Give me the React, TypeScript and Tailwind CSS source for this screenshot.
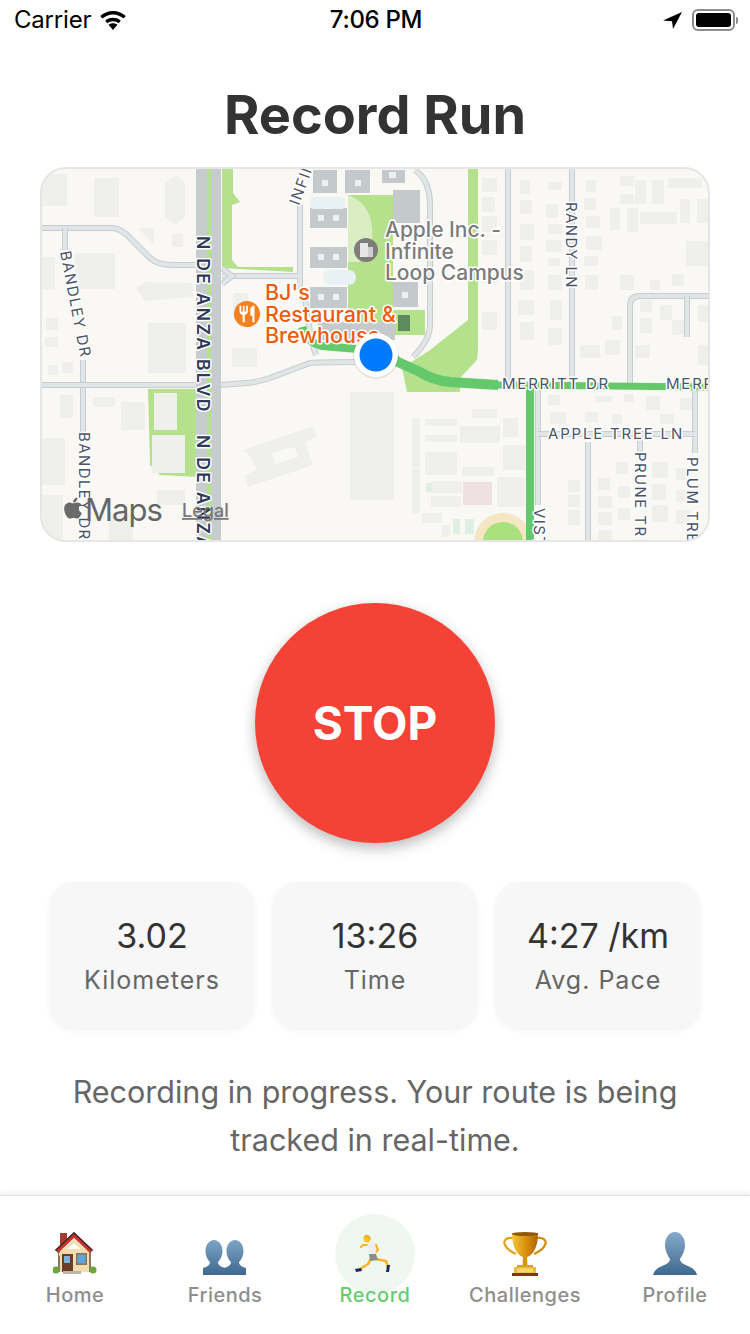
import React from 'react';
import { FaApple } from 'react-icons/fa';
import { MdRestaurant } from 'react-icons/md';

type Box = [number, number, number, number];

// x1, y1, x2, y2 in page coordinates (the svg's viewBox starts at the map corner)
const BUILDINGS: Box[] = [
  [42, 174, 67, 206], [94, 178, 119, 217], [172, 234, 183, 247], [60, 248, 72, 252], [75, 253, 115, 289], [42, 257, 55, 290],
  [148, 323, 186, 373], [46, 318, 58, 330], [45, 337, 58, 347], [233, 293, 248, 310], [232, 348, 257, 367],
  [48, 365, 58, 375], [62, 362, 73, 373], [60, 395, 73, 418], [93, 397, 115, 407], [121, 402, 145, 430], [42, 438, 65, 485],
  [42, 495, 63, 540], [157, 490, 185, 505], [109, 513, 133, 540], [350, 392, 394, 500],
  [472, 409, 497, 418], [412, 418, 420, 467], [425, 419, 457, 426], [425, 435, 457, 442], [460, 426, 500, 443], [425, 452, 457, 475],
  [462, 467, 494, 476], [503, 418, 518, 437], [503, 445, 527, 470], [412, 468, 420, 513], [422, 513, 442, 523], [442, 525, 450, 537],
  [431, 481, 462, 493], [431, 496, 461, 507], [497, 477, 525, 507],
  // houses
  [482, 178, 497, 192], [482, 197, 495, 212], [482, 216, 497, 232], [482, 240, 497, 255], [482, 270, 497, 283], [482, 312, 497, 330],
  [520, 180, 530, 194], [520, 200, 532, 214], [548, 182, 562, 190], [546, 204, 558, 218], [548, 224, 562, 234], [520, 224, 534, 240],
  [546, 240, 562, 252], [520, 246, 532, 262], [548, 258, 560, 266], [520, 270, 534, 290], [548, 275, 562, 290], [518, 300, 534, 315],
  [550, 300, 562, 320], [520, 322, 534, 340], [548, 328, 562, 345], [586, 180, 596, 192], [584, 198, 596, 210], [586, 216, 600, 228],
  [586, 236, 602, 250], [584, 256, 598, 266], [585, 275, 598, 290], [620, 176, 634, 186], [620, 194, 634, 204], [635, 180, 646, 204],
  [652, 180, 664, 204], [668, 178, 702, 188], [610, 208, 620, 230], [627, 208, 638, 232], [640, 212, 677, 224], [680, 199, 690, 223],
  [697, 199, 708, 223], [686, 241, 708, 266], [650, 280, 660, 290], [620, 275, 634, 290], [672, 274, 684, 286], [640, 300, 652, 312],
  [612, 316, 622, 330], [640, 318, 652, 333], [660, 305, 672, 320], [672, 320, 684, 335], [698, 305, 708, 322], [605, 340, 620, 355],
  [635, 345, 650, 358], [698, 345, 708, 365], [580, 345, 600, 358], [548, 395, 560, 405], [595, 396, 612, 402], [624, 394, 634, 402],
  [646, 396, 660, 410], [680, 398, 692, 410], [550, 412, 566, 424], [585, 412, 598, 422], [612, 414, 622, 424], [660, 414, 674, 424],
  [568, 480, 580, 492], [568, 495, 580, 507], [568, 510, 580, 525], [598, 478, 610, 490], [598, 496, 612, 508], [598, 512, 612, 525],
  [598, 530, 612, 540], [652, 462, 668, 478], [652, 484, 666, 500], [652, 505, 668, 522], [676, 468, 688, 480], [676, 490, 688, 502],
  [676, 510, 690, 524], [616, 462, 628, 474], [618, 486, 630, 498], [618, 508, 630, 520],
];

const GREY_BUILDINGS: Box[] = [
  [310, 208, 347, 228], [310, 247, 347, 268], [310, 287, 347, 308], [313, 170, 337, 193], [345, 170, 370, 193],
  [382, 170, 405, 183], [393, 190, 420, 223], [393, 282, 418, 307], [318, 322, 395, 340],
];

const WINDOWS: Box[] = [
  [318, 215, 324, 221], [333, 215, 339, 221], [318, 254, 324, 260], [333, 254, 339, 260], [318, 294, 324, 300], [333, 294, 339, 300],
  [322, 180, 328, 186], [355, 180, 361, 186], [389, 172, 396, 178], [402, 292, 408, 298],
];

const LIGHT_ROADS: string[] = [
  'M42 228 L113 228 Q122 229 130 238 L150 258 Q158 265 172 265 L196 265',
  'M65 228 L65 250',
  'M83 360 L83 432',
  'M42 385 L196 385',
  'M220 385 L247 383 Q258 382 270 378 L310 363 Q320 362 355 362',
  'M222 276 L300 276 M300 205 L300 290',
  'M222 268 L232 276 L222 284',
  'M304 290 Q310 340 316 355',
  'M415 170 Q430 180 430 205 L430 325 Q430 340 413 357',
  'M508 168 L508 385',
  'M572 168 L572 385',
  'M708 296 L640 296 Q630 296 630 306 L630 385',
  'M687 296 L687 337',
  'M695 385 L695 453',
  'M538 388 L538 505',
  'M538 434 L695 434',
  'M588 442 L588 542',
  'M640 440 L640 452',
];

function MapLabel({ x, y, size, fill, weight = 400, spacing = 0, rotate, children }: {
  x: number; y: number; size: number; fill: string; weight?: number; spacing?: number; rotate?: number; children: string;
}) {
  return (
    <text
      x={x}
      y={y}
      fontSize={size}
      fontWeight={weight}
      fill={fill}
      stroke="#ffffff"
      strokeWidth={3}
      strokeLinejoin="round"
      paintOrder="stroke"
      letterSpacing={spacing}
      transform={rotate ? `rotate(${rotate} ${x} ${y})` : undefined}
    >
      {children}
    </text>
  );
}

function RunMap() {
  return (
    <div className="mx-10 mt-[21px] h-[375px] overflow-hidden rounded-[26px] border-2 border-[#e6e6e6] bg-[#f9f8f4]">
      <svg viewBox="42 169 666 371" className="block h-full w-full font-['Inter',sans-serif]">
        <polygon points="222,168 233,168 233,193 240,202 232,205 232,260 238,267 293,267 293,272 222,268" fill="#b5e18d" />
        <polygon points="348,195 393,195 393,340 348,340" fill="#b5e18d" />
        <polygon points="468,168 478,168 478,350 477,360 460,378 460,392 407,392 402,368 430,350 468,320" fill="#b5e18d" />
        <polygon points="148,389 197,389 197,477 160,475 150,465" fill="#b5e18d" />
        <polygon points="393,310 425,310 425,335 393,335" fill="#b5e18d" />
        <path d="M348 195 Q375 205 372 240 L360 262 L348 262Z" fill="#f3f6e8" opacity="0.6" />

        {BUILDINGS.map(([x1, y1, x2, y2], i) => (
          <rect key={i} x={x1} y={y1} width={x2 - x1} height={y2 - y1} fill="#efefec" />
        ))}
        <polygon points="165,183 177,175 185,183 185,217 175,225 165,217" fill="#efefec" />
        <polygon points="138,228 154,228 154,245" fill="#efefec" />
        <polygon points="136,288 145,282 193,283 193,297 145,301" fill="#efefec" />
        <rect x={154} y={393} width={23} height={37} fill="#efefec" />
        <rect x={152} y={435} width={33} height={38} fill="#efefec" />
        <polygon points="243,450 313,426 317,437 305,442 313,465 248,487 245,475 257,470 250,456" fill="#efefec" />
        <polygon points="272,453 295,447 298,457 275,464" fill="#f9f8f4" />
        <rect x={463} y={482} width={29} height={23} fill="#efe1e1" />
        <rect x={426} y={483} width={6} height={9} fill="#dff0e2" />
        <rect x={453} y={519} width={7} height={15} fill="#dff0e2" />
        <rect x={465} y={519} width={9} height={15} fill="#dff0e2" />
        <circle cx={503} cy={542} r={29} fill="#f4e7c4" />
        <circle cx={503} cy={542} r={20} fill="#a9e17f" />

        {LIGHT_ROADS.map((d) => (
          <g key={d}>
            <path d={d} fill="none" stroke="#c6cdce" strokeWidth={6} />
            <path d={d} fill="none" stroke="#e0e6e7" strokeWidth={4} />
          </g>
        ))}

        {GREY_BUILDINGS.map(([x1, y1, x2, y2], i) => (
          <rect key={i} x={x1} y={y1} width={x2 - x1} height={y2 - y1} fill="#c4c9cb" />
        ))}
        {WINDOWS.map(([x1, y1, x2, y2], i) => (
          <rect key={i} x={x1} y={y1} width={x2 - x1} height={y2 - y1} fill="#edf1f2" />
        ))}
        <rect x={310} y={197} width={35} height={12} rx={4} fill="#e8f1f3" />
        <rect x={323} y={270} width={33} height={15} rx={7} fill="#e8f1f3" />
        <rect x={398} y={315} width={12} height={16} fill="#5d8a5e" />

        {/* N De Anza Blvd */}
        <rect x={196} y={168} width={11} height={374} fill="#c7ccce" />
        <rect x={207} y={168} width={5} height={374} fill="#b5e18d" />
        <rect x={211} y={168} width={10} height={374} fill="#c7ccce" />

        {/* route */}
        <path d="M302 327 Q306 342 322 346 L370 350" fill="none" stroke="#65c96c" strokeWidth={8} />
        <path d="M385 352 L398 362 L420 372 Q432 380 450 382 L498 385" fill="none" stroke="#65c96c" strokeWidth={10} />
        <path d="M495 385 L708 387" fill="none" stroke="#65c96c" strokeWidth={7} />
        <path d="M530 386 L530 542" fill="none" stroke="#65c96c" strokeWidth={8} />

        <MapLabel x={197} y={236} size={17.5} weight={600} fill="#2d3a58" spacing={2.3} rotate={90}>N DE ANZA BLVD</MapLabel>
        <MapLabel x={197} y={435} size={17.5} weight={600} fill="#2d3a58" spacing={2.3} rotate={90}>N DE ANZA</MapLabel>
        <MapLabel x={60} y={252} size={15} fill="#4b5368" spacing={1.4} rotate={79}>BANDLEY DR</MapLabel>
        <MapLabel x={79} y={432} size={15} fill="#4b5368" spacing={1.4} rotate={90}>BANDLEY DR</MapLabel>
        <MapLabel x={566} y={202} size={15} fill="#4b5368" spacing={1.4} rotate={90}>RANDY LN</MapLabel>
        <MapLabel x={635} y={452} size={15} fill="#4b5368" spacing={1.4} rotate={90}>PRUNE TR</MapLabel>
        <MapLabel x={687} y={457} size={15} fill="#4b5368" spacing={1.4} rotate={90}>PLUM TRE</MapLabel>
        <MapLabel x={534} y={508} size={15} fill="#4b5368" spacing={1.4} rotate={90}>VISTA</MapLabel>
        <MapLabel x={299} y={206} size={15} fill="#4b5368" spacing={1.4} rotate={-70}>INFINITE</MapLabel>
        <MapLabel x={502} y={389} size={15} fill="#4b5368" spacing={1.8}>MERRITT DR</MapLabel>
        <MapLabel x={666} y={389} size={15} fill="#4b5368" spacing={1.8}>MERRITT</MapLabel>
        <MapLabel x={548} y={439} size={15} fill="#4b5368" spacing={1.8}>APPLE TREE LN</MapLabel>

        <circle cx={366} cy={250} r={12} fill="#807c79" />
        <rect x={360} y={243} width={8} height={14} fill="#e6e6e6" />
        <rect x={368} y={247} width={5} height={10} fill="#cfcfcf" />

        <circle cx={247} cy={314} r={13} fill="#f5801e" />
        <MdRestaurant x={237} y={304} size={20} color="#ffffff" />

        <MapLabel x={385} y={237} size={21} weight={500} fill="#7b7b7b">Apple Inc. -</MapLabel>
        <MapLabel x={385} y={259} size={21} weight={500} fill="#7b7b7b">Infinite</MapLabel>
        <MapLabel x={385} y={280} size={21} weight={500} fill="#7b7b7b">Loop Campus</MapLabel>
        <MapLabel x={265} y={300} size={21.5} weight={500} fill="#eb5c10">BJ's</MapLabel>
        <MapLabel x={265} y={322} size={21.5} weight={500} fill="#eb5c10">Restaurant &amp;</MapLabel>
        <MapLabel x={265} y={343} size={21.5} weight={500} fill="#eb5c10">Brewhouse</MapLabel>

        <circle cx={376} cy={356} r={23} fill="#000000" opacity="0.08" />
        <circle cx={376} cy={355} r={22} fill="#ffffff" />
        <circle cx={376} cy={355} r={16.5} fill="#007aff" />

        <FaApple x={61} y={496} size={24} color="#6a6a6a" />
        <text x={85} y={521} fontSize={31} fill="#666666" letterSpacing={-1}>Maps</text>
        <text x={182} y={517} fontSize={18} fontWeight={500} fill="#777777" textDecoration="underline">Legal</text>
      </svg>
    </div>
  );
}

function StatCard({ value, label }: { value: string; label: string }) {
  return (
    <div className="flex h-[146px] w-[204px] flex-col items-center rounded-[24px] bg-[#f7f7f7] pt-[32px] shadow-[0_2px_6px_rgba(0,0,0,0.06)]">
      <div className="text-[34px] leading-[44px] text-[#333333]">{value}</div>
      <div className="mt-[6px] text-[25px] leading-[32px] tracking-[1px] text-[#666666]">{label}</div>
    </div>
  );
}

function HouseIcon() {
  return (
    <svg width="44" height="44" viewBox="0 0 44 44">
      <rect x="7" y="1" width="7" height="12" fill="#a83a30" />
      <rect x="5" y="17" width="33" height="23" fill="#f3dcae" />
      <rect x="5" y="17" width="2" height="23" fill="#8a7658" />
      <rect x="36" y="17" width="2" height="23" fill="#8a7658" />
      <path d="M21 7 L6 21 L6 24 L21 11 L36 24 L36 21Z" fill="#f3dcae" />
      <path d="M21 0 L2 18 L5 21 L21 6 L37 21 L40 18Z" fill="#c9332b" />
      <path d="M21 0 L2 18 L3 19 L21 2 L39 19 L40 18Z" fill="#3a2a28" />
      <rect x="9" y="22" width="11" height="18" fill="#6a3d24" />
      <rect x="11" y="24" width="6" height="7" fill="#7fb2d6" />
      <rect x="23" y="21" width="11" height="12" fill="#8d7152" />
      <rect x="24.5" y="22.5" width="8" height="9" fill="#5fa5e0" />
      <rect x="10" y="39" width="18" height="3" fill="#bdb5a6" />
      <circle cx="3" cy="38" r="3.5" fill="#6ca63a" />
      <circle cx="40" cy="38" r="3.5" fill="#6ca63a" />
    </svg>
  );
}

const BUST_PATH = 'M22 0C28 0 32 6 32 13C32 19 29 24 27 27C27 30 30 32 35 34C40 36 43 39 44 43L0 43C1 39 4 36 9 34C14 32 17 30 17 27C15 24 12 19 12 13C12 6 16 0 22 0Z';
const SMALL_BUST_PATH = 'M11 8C16 8 19.5 13 19.5 19C19.5 24 17 28 15 30C15 33 18 35 22 36L22 43L0 43L0 36C4 35 7 33 7 30C5 28 2.5 24 2.5 19C2.5 13 6 8 11 8Z';

function ProfileIcon() {
  return (
    <svg width="44" height="44" viewBox="0 0 44 44">
      <defs>
        <linearGradient id="bustA" x1="0" y1="0" x2="0" y2="1">
          <stop offset="0" stopColor="#85abcb" />
          <stop offset="1" stopColor="#40688f" />
        </linearGradient>
      </defs>
      <path d={BUST_PATH} fill="url(#bustA)" />
    </svg>
  );
}

function FriendsIcon() {
  return (
    <svg width="44" height="44" viewBox="0 0 44 44">
      <defs>
        <linearGradient id="bustB" x1="0" y1="0" x2="0" y2="1">
          <stop offset="0" stopColor="#7ea5c6" />
          <stop offset="1" stopColor="#40688f" />
        </linearGradient>
      </defs>
      <path d={SMALL_BUST_PATH} fill="url(#bustB)" />
      <path d={SMALL_BUST_PATH} fill="url(#bustB)" transform="translate(21 0)" />
    </svg>
  );
}

function RunnerIcon() {
  return (
    <svg width="44" height="44" viewBox="0 0 44 44">
      <g fill="none" strokeLinecap="round" strokeLinejoin="round">
        <path d="M18 27 L15 32 L7 37" stroke="#f6b526" strokeWidth="2.6" />
        <path d="M23 27 L33 29 L35 35" stroke="#f6b526" strokeWidth="2.6" />
        <path d="M15 13 L10 13 L8 15" stroke="#f6b526" strokeWidth="2" />
        <path d="M23 13 L25 18 L21 22" stroke="#f6b526" strokeWidth="2.2" />
      </g>
      <path d="M14 11 L22 11 L23 23 L16 23Z" fill="#eceff2" />
      <path d="M16 22 L23 22 L25 28 L17 29Z" fill="#8d8d8d" />
      <path d="M2 37 L8 36 L9 39 L3 40Z" fill="#1c2a5c" />
      <path d="M34 33 L37 33 L36 40 L33 40Z" fill="#1c2a5c" />
      <circle cx="14" cy="7" r="3.6" fill="#fbc42e" />
      <path d="M10.5 6 Q11.5 2 15 3 Q18 4 17.5 8 Q15 5 10.5 6Z" fill="#f0b020" />
    </svg>
  );
}

function TrophyIcon() {
  return (
    <svg width="44" height="44" viewBox="0 0 44 44">
      <defs>
        <linearGradient id="cup" x1="0" y1="0" x2="1" y2="0">
          <stop offset="0" stopColor="#f6c43c" />
          <stop offset="0.55" stopColor="#d88f0a" />
          <stop offset="1" stopColor="#a96207" />
        </linearGradient>
      </defs>
      <path d="M10 6 C3 5 0 9 2 13 C4 18 9 20 13 22" fill="none" stroke="#e2a31d" strokeWidth="2.2" />
      <path d="M34 6 C41 5 44 9 42 13 C40 18 35 20 31 22" fill="none" stroke="#d18d12" strokeWidth="2.2" />
      <path d="M9 1 L35 1 C35 14 31 22 24.5 25 L19.5 25 C13 22 9 14 9 1Z" fill="url(#cup)" />
      <ellipse cx="22" cy="2" rx="13" ry="2" fill="#8f5a0a" />
      <path d="M20 25 L24 25 L24.5 34 L19.5 34Z" fill="#d4960f" />
      <rect x="14" y="33" width="16" height="2" fill="#d9a21c" />
      <rect x="11" y="35" width="22" height="7" fill="#e9bb3f" />
      <rect x="14" y="36.5" width="16" height="4" fill="#f6d871" />
      <rect x="9" y="41" width="26" height="3" fill="#7b3a12" />
    </svg>
  );
}

function TabItem({ icon, label, active }: { icon: React.ReactNode; label: string; active?: boolean }) {
  return (
    <div className="flex w-[150px] flex-col items-center">
      {active ? (
        <div className="flex h-[80px] w-[80px] items-center justify-center rounded-full bg-[#eff8f0]">{icon}</div>
      ) : (
        <div className="flex h-[80px] w-[80px] items-center justify-center">{icon}</div>
      )}
      <div className={`-mt-[13px] text-[20px] font-medium leading-[28px] tracking-[0.5px] ${active ? 'text-[#66cc6e]' : 'text-[#8e8e8e]'}`}>{label}</div>
    </div>
  );
}

export default function App() {
  return (
    <div className="flex h-[1334px] w-[750px] flex-col overflow-hidden bg-white font-['Inter',sans-serif]">
      {/* status bar */}
      <div className="grid h-[40px] grid-cols-[1fr_auto_1fr] items-center pl-[14px] pr-[12px] text-[24px] text-black">
        <div className="flex items-center gap-[7px]">
          <span className="leading-none tracking-[-0.2px]">Carrier</span>
          <svg width="30" height="20" viewBox="0 0 30 20">
            <path d="M15 20 L10.6 14.8 C13 12.8 17 12.8 19.4 14.8Z" fill="#000" />
            <path d="M15 7.8 C18.4 7.8 21 9 22.8 10.7 L20.7 13.2 C19.2 12 17.4 11.2 15 11.2 C12.6 11.2 10.8 12 9.3 13.2 L7.2 10.7 C9 9 11.6 7.8 15 7.8Z" fill="#000" />
            <path d="M15 1 C20 1 24.6 3 27.8 6 L25.6 8.6 C22.8 6 19.2 4.4 15 4.4 C10.8 4.4 7.2 6 4.4 8.6 L2.2 6 C5.4 3 10 1 15 1Z" fill="#000" />
          </svg>
        </div>
        <span className="font-medium leading-none tracking-[-0.3px]">7:06 PM</span>
        <div className="flex items-center justify-end gap-[10px]">
          <svg width="19" height="17" viewBox="0 0 19 17">
            <path d="M19 0 L0 8.5 L9 9.2 L10 17Z" fill="#000" />
          </svg>
          <div className="flex items-center">
            <div className="flex h-[22px] w-[43px] items-center rounded-[6px] border-2 border-[#8c8c8c] p-[2px]">
              <div className="h-full w-full rounded-[3px] bg-black" />
            </div>
            <div className="ml-[1px] h-[7px] w-[2px] rounded-r-sm bg-[#8c8c8c]" />
          </div>
        </div>
      </div>

      <h1 className="mt-[44px] text-center text-[54px] font-bold leading-[62px] text-[#333333]">Record Run</h1>

      <RunMap />

      <div className="mt-[61px] flex justify-center">
        <div className="flex h-[240px] w-[240px] items-center justify-center rounded-full bg-[#f44336] shadow-[0_5px_14px_rgba(0,0,0,0.28)]">
          <span className="text-[46px] font-bold text-white">STOP</span>
        </div>
      </div>

      <div className="mt-[39px] flex justify-center gap-[19px]">
        <StatCard value="3.02" label="Kilometers" />
        <StatCard value="13:26" label="Time" />
        <StatCard value="4:27 /km" label="Avg. Pace" />
      </div>

      <p className="mx-auto mt-[40px] w-[650px] text-center text-[30.5px] leading-[48px] text-[#666666]">
        Recording in progress. Your route is being tracked in real-time.
      </p>

      <div className="mt-auto flex h-[139px] justify-center border-t border-[#e4e4e4] bg-white pt-[18px] shadow-[0_-3px_5px_rgba(0,0,0,0.06)]">
        <TabItem icon={<HouseIcon />} label="Home" />
        <TabItem icon={<FriendsIcon />} label="Friends" />
        <TabItem icon={<RunnerIcon />} label="Record" active />
        <TabItem icon={<TrophyIcon />} label="Challenges" />
        <TabItem icon={<ProfileIcon />} label="Profile" />
      </div>
    </div>
  );
}
